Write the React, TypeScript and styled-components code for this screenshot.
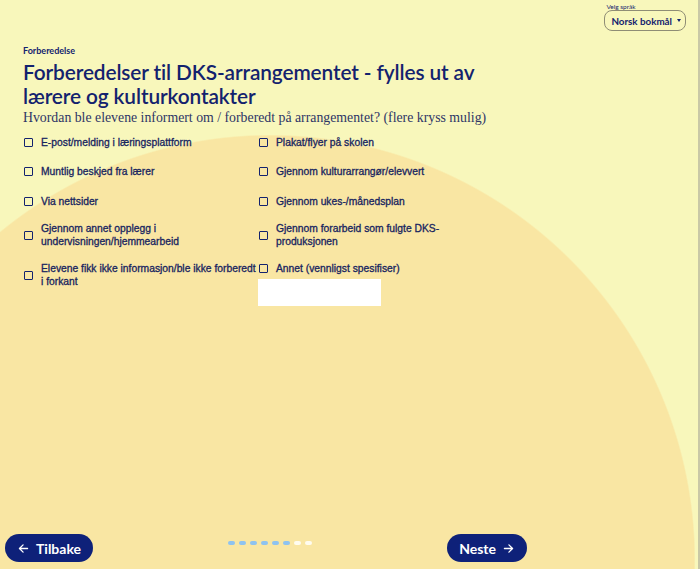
import React, { useState } from 'react';
import styled, { createGlobalStyle } from 'styled-components';

const navy = '#13226e';
const buttonNavy = '#0e2179';

const GlobalStyle = createGlobalStyle`
    html, body {
        margin: 0;
        padding: 0;
        height: 100%;
    }
    body {
        font-family: "Lato", "Noto Sans", sans-serif;
        color: ${navy};
    }
    #root {
        height: 100%;
    }
`;

type Option = {
    id: string,
    label: string,
    freeText?: boolean,
}

const leftOptions: Option[] = [
    {id: 'epost', label: 'E-post/melding i læringsplattform'},
    {id: 'muntlig', label: 'Muntlig beskjed fra lærer'},
    {id: 'nett', label: 'Via nettsider'},
    {id: 'opplegg', label: 'Gjennom annet opplegg i undervisningen/hjemmearbeid'},
    {id: 'ingen', label: 'Elevene fikk ikke informasjon/ble ikke forberedt i forkant'},
];

const rightOptions: Option[] = [
    {id: 'plakat', label: 'Plakat/flyer på skolen'},
    {id: 'arrangor', label: 'Gjennom kulturarrangør/elevvert'},
    {id: 'plan', label: 'Gjennom ukes-/månedsplan'},
    {id: 'forarbeid', label: 'Gjennom forarbeid som fulgte DKS-produksjonen'},
    {id: 'annet', label: 'Annet (vennligst spesifiser)', freeText: true},
];

const steps = [true, true, true, true, true, true, false, false];

export default function App() {
    const [checked, setChecked] = useState<Record<string, boolean>>({});
    const toggle = (id: string) => setChecked(prev => ({...prev, [id]: !prev[id]}));

    // left and right column alternate so the grid fills row by row
    const cells = leftOptions.flatMap((left, i) => [left, rightOptions[i]]);

    return (
        <>
            <GlobalStyle/>
            <Page>
                <TopBar>
                    <LangPicker>
                        <LangLabel>Velg språk</LangLabel>
                        <LangSelect type="button">
                            Norsk bokmål <Caret/>
                        </LangSelect>
                    </LangPicker>
                </TopBar>
                <Main>
                    <SectionName>Forberedelse</SectionName>
                    <Title>Forberedelser til DKS-arrangementet - fylles ut av lærere og kulturkontakter</Title>
                    <Question>Hvordan ble elevene informert om / forberedt på arrangementet? (flere kryss mulig)</Question>
                    <OptionsGrid>
                        {cells.map(option => (
                            <OptionCell key={option.id}>
                                <OptionRow>
                                    <Box
                                        type="checkbox"
                                        checked={!!checked[option.id]}
                                        onChange={() => toggle(option.id)}
                                    />
                                    <OptionText>{option.label}</OptionText>
                                </OptionRow>
                                {option.freeText && <FreeText type="text"/>}
                            </OptionCell>
                        ))}
                    </OptionsGrid>
                </Main>
                <Footer>
                    <NavButton type="button">
                        <Arrow viewBox="0 0 16 16"><path d="M13 8H3.5M7.5 3.5L3 8l4.5 4.5"/></Arrow>
                        Tilbake
                    </NavButton>
                    <Dots>
                        {steps.map((done, i) => <Dot key={i} $done={done}/>)}
                    </Dots>
                    <NavButton type="button">
                        Neste
                        <Arrow viewBox="0 0 16 16"><path d="M3 8h9.5M8.5 3.5L13 8l-4.5 4.5"/></Arrow>
                    </NavButton>
                </Footer>
            </Page>
        </>
    )
}

const Page = styled.div`
    box-sizing: border-box;
    min-height: 100vh;
    display: flex;
    flex-direction: column;
    border-right: 2px solid #c9c8a6;
    background: radial-gradient(circle 425px at 270px 560px, #f9e6a3 424px, #f8f7bb 425.5px);
`;

const TopBar = styled.header`
    display: flex;
    justify-content: flex-end;
    padding: 3px 12px 0 0;
`;

const LangPicker = styled.div`
    display: flex;
    flex-direction: column;
    align-items: flex-start;
`;

const LangLabel = styled.span`
    font-size: 6.5px;
    line-height: 7px;
    margin-left: 2px;
    color: ${navy};
`;

const LangSelect = styled.button`
    display: inline-flex;
    align-items: center;
    gap: 5px;
    height: 21px;
    padding: 0 4px 0 6px;
    border: 1px solid #8f8d75;
    border-radius: 8px;
    background: transparent;
    font-family: "Lato", sans-serif;
    font-weight: 700;
    font-size: 9.8px;
    color: ${navy};
`;

const Caret = styled.span`
    width: 0;
    height: 0;
    border-left: 2.5px solid transparent;
    border-right: 2.5px solid transparent;
    border-top: 3px solid ${navy};
`;

const Main = styled.main`
    max-width: 474px;
    padding: 0 0 0 23px;
    margin-top: 14px;
`;

const SectionName = styled.div`
    font-weight: 700;
    font-size: 9px;
    line-height: 12px;
`;

const Title = styled.h1`
    margin: 3px 0 0;
    font-weight: 600;
    font-size: 20.8px;
    line-height: 24px;
    letter-spacing: -0.1px;
`;

const Question = styled.p`
    margin: 0;
    font-family: "Liberation Serif", serif;
    font-size: 13.8px;
    line-height: 20px;
    white-space: nowrap;
    color: #2e3566;
`;

const OptionsGrid = styled.div`
    display: grid;
    grid-template-columns: 235px 235px;
    grid-template-rows: 29px 30px 27px 40px auto;
    margin-top: 8px;
    align-items: start;
`;

const OptionCell = styled.div`
    display: flex;
    flex-direction: column;
    gap: 4px;
    padding-left: 1px;
`;

const OptionRow = styled.label`
    display: flex;
    align-items: center;
    gap: 8px;
    cursor: pointer;
`;

const Box = styled.input`
    appearance: none;
    flex: none;
    margin: 0;
    width: 9px;
    height: 9px;
    border: 1.5px solid ${navy};
    border-radius: 1px;
    box-sizing: border-box;
    background: transparent;
    &:checked {
        background: ${navy};
    }
`;

const OptionText = styled.span`
    font-family: "Liberation Sans", Arial, sans-serif;
    font-size: 10.3px;
    line-height: 13px;
    max-width: 217px;
    color: #17245f;
    -webkit-text-stroke: 0.3px currentColor;
`;

const FreeText = styled.input`
    width: 123px;
    height: 27px;
    box-sizing: border-box;
    border: none;
    background: #ffffff;
    margin-left: -1px;
`;

const Footer = styled.footer`
    margin-top: auto;
    width: 532px;
    box-sizing: border-box;
    padding: 0 5px 7px;
    display: flex;
    justify-content: space-between;
    align-items: center;
`;

const NavButton = styled.button`
    display: inline-flex;
    align-items: center;
    gap: 6px;
    height: 28px;
    padding: 0 12px;
    border: none;
    border-radius: 14px;
    background: ${buttonNavy};
    color: #ffffff;
    font-family: "Lato", sans-serif;
    font-weight: 700;
    font-size: 14px;
`;

const Arrow = styled.svg`
    width: 13px;
    height: 13px;
    fill: none;
    stroke: #ffffff;
    stroke-width: 1.6;
    stroke-linecap: round;
    stroke-linejoin: round;
`;

const Dots = styled.div`
    display: flex;
    gap: 4px;
    margin-top: -10px;
`;

const Dot = styled.span<{$done: boolean}>`
    width: 7px;
    height: 4.5px;
    border-radius: 2.5px;
    background: ${props => props.$done ? '#8fc3f0' : '#fffcef'};
`;
